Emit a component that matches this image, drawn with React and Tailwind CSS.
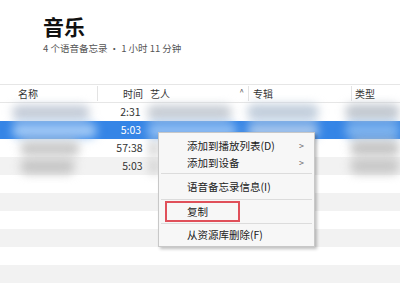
import React from "react";

const font = { fontFamily: '"Noto Sans CJK SC", "Noto Sans", sans-serif' };

function Cell({ width, blob }) {
  return (
    <div className={"flex h-full items-center " + width}>
      {blob && <div className={"rounded-full blur-[5px] " + blob} />}
    </div>
  );
}

function Row({ time = "", bg, selected, name, artist, album, type }) {
  return (
    <div className={"flex h-[18px] items-center text-[10.5px] " + bg}>
      <Cell width="w-[98px] pl-[12px]" blob={name} />
      <div className={"w-[45px] text-right " + (selected ? "text-white" : "text-[#333]")}>{time}</div>
      <Cell width="w-[106px] pl-[6px]" blob={artist} />
      <Cell width="w-[100px] pl-[2px]" blob={album} />
      <Cell width="flex-1 pl-[2px]" blob={type} />
    </div>
  );
}

function Item({ label, arrow, boxed }) {
  return (
    <div className="relative flex h-[17px] items-center pl-[28px] pr-[10px] text-[10.5px] text-[#222]">
      <span className="flex-1">{label}</span>
      {arrow && <span className="text-[9px] text-[#666]">&gt;</span>}
      {boxed && (
        <div className="absolute left-[6px] top-[-2px] h-[21px] w-[75px] border-2 border-[#e0505a]" />
      )}
    </div>
  );
}

function Sep() {
  return <div className="mx-[2px] my-[2px] h-px bg-[#dcdcdc]" />;
}

export default function App() {
  return (
    <div className="relative h-[300px] w-[400px] overflow-hidden bg-white" style={font}>
      <div className="pl-[43px] pt-[12px]">
        <div className="text-[21px] font-bold leading-[28px] text-[#111]">音乐</div>
        <div className="mt-[1px] text-[9.5px] leading-[14px] text-[#555]">4 个语音备忘录 • 1 小时 11 分钟</div>
      </div>

      <div className="mt-[29px] flex h-[19px] items-center border-y border-[#e6e6e6] text-[10px] text-[#333]">
        <div className="w-[98px] border-r border-[#e3e3e3] pl-[18px]">名称</div>
        <div className="w-[50px] pr-[5px] text-right">时间</div>
        <div className="flex w-[101px] border-r border-[#e3e3e3] pl-[2px] pr-[4px]">
          <span className="flex-1">艺人</span>
          <span className="text-[8px] text-[#555]">^</span>
        </div>
        <div className="w-[103px] border-r border-[#e3e3e3] pl-[4px]">专辑</div>
        <div className="pl-[3px]">类型</div>
      </div>

      <div className="flex flex-col">
        <Row time="2:31" bg="bg-white" name="h-[15px] w-[78px] bg-[#c4ccd8]" artist="h-[15px] w-[85px] bg-[#c6ccd4]" album="h-[16px] w-[72px] bg-[#c2cedc]" type="h-[16px] w-[55px] bg-[#c2c8d0]" />
        <Row time="5:03" bg="bg-[#3585e6]" selected name="h-[15px] w-[85px] bg-[#a0c8f5]" artist="h-[15px] w-[90px] bg-[#8fbdf2]" album="h-[15px] w-[72px] bg-[#a6c6ec]" type="h-[15px] w-[55px] bg-[#7fb4ee]" />
        <Row time="57:38" bg="bg-white" name="ml-[8px] h-[15px] w-[60px] bg-[#cacaca]" artist="h-[15px] w-[10px] bg-[#d0d0d0]" type="h-[16px] w-[50px] bg-[#c6c6c6]" />
        <Row time="5:03" bg="bg-[#f2f2f2]" name="ml-[8px] h-[15px] w-[55px] bg-[#c6c6c6]" artist="h-[15px] w-[10px] bg-[#d0d0d0]" type="h-[16px] w-[50px] bg-[#c8c8c8]" />
        <Row bg="bg-white" />
        <Row bg="bg-[#f2f2f2]" />
        <Row bg="bg-white" />
        <Row bg="bg-[#f2f2f2]" />
        <Row bg="bg-white" />
        <Row bg="bg-[#f2f2f2]" />
        <Row bg="bg-white" />
      </div>

      <div className="absolute left-[158px] top-[132px] w-[157px] border border-[#c8c8c8] bg-[#f7f7f7] pb-[3px] pt-[4px] shadow-[2px_2px_3px_rgba(0,0,0,0.25)]">
        <Item label="添加到播放列表(D)" arrow />
        <Item label="添加到设备" arrow />
        <Sep />
        <div className="h-[2px]" />
        <Item label="语音备忘录信息(I)" />
        <div className="h-[2px]" />
        <Sep />
        <div className="h-px" />
        <Item label="复制" boxed />
        <div className="h-px" />
        <Sep />
        <Item label="从资源库删除(F)" />
      </div>
    </div>
  );
}
